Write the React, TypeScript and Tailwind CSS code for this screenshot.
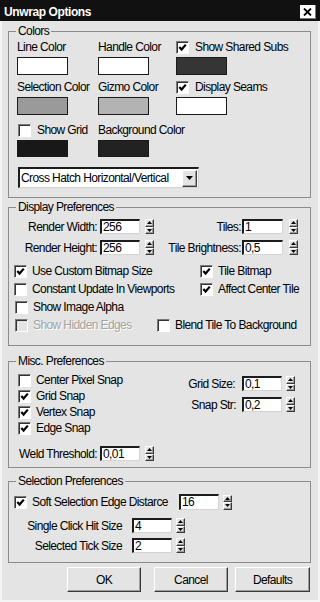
import React from "react";

const sunken =
  "border-t-2 border-l-2 border-t-[#1c1c1c] border-l-[#1c1c1c] border-r border-b border-r-[#d4d4d4] border-b-[#d4d4d4] bg-white";
const raised =
  "border border-t-white border-l-white border-r-[#3a3a3a] border-b-[#3a3a3a] shadow-[inset_-1px_-1px_0_#9c9c9c]";

function Check({ on, off }: { on?: boolean; off?: boolean }) {
  return (
    <span
      className={`flex h-[13px] w-[13px] shrink-0 items-center justify-center border border-t-[#7a7a7a] border-l-[#7a7a7a] border-r-white border-b-white shadow-[inset_1px_1px_0_#333] ${
        off ? "bg-[#e4e4e4]" : "bg-white"
      }`}
    >
      {on && (
        <svg width="9" height="9" viewBox="0 0 9 9">
          <path d="M1.3 4 L3.6 6.5 L7.8 1.6" fill="none" stroke="#000" strokeWidth="2.2" />
        </svg>
      )}
    </span>
  );
}

function CheckLabel({
  label,
  on,
  off,
  gap = "gap-[5px]",
}: {
  label: string;
  on?: boolean;
  off?: boolean;
  gap?: string;
}) {
  return (
    <div className={`flex items-center ${gap}`}>
      <Check on={on} off={off} />
      <span className={off ? "text-[#a3a3a3] [text-shadow:1px_1px_0_#fff]" : ""}>{label}</span>
    </div>
  );
}

function Spin() {
  return (
    <div className="flex h-[15px] w-[9px] shrink-0 flex-col bg-[#e4e4e4]">
      <div className={`flex flex-1 items-center justify-center ${raised}`}>
        <svg width="5" height="3" viewBox="0 0 5 3">
          <path d="M2.5 0 L5 3 L0 3Z" fill="#000" />
        </svg>
      </div>
      <div className={`flex flex-1 items-center justify-center ${raised}`}>
        <svg width="5" height="3" viewBox="0 0 5 3">
          <path d="M0 0 L5 0 L2.5 3Z" fill="#000" />
        </svg>
      </div>
    </div>
  );
}

function Num({ value, w = "w-[40px]", h = "h-[15px]" }: { value: string; w?: string; h?: string }) {
  return (
    <div className={`${w} ${h} shrink-0 pl-[1px] leading-[12px] ${sunken}`}>{value}</div>
  );
}

function Swatch({ color, h = "h-[18px]" }: { color: string; h?: string }) {
  return <div className={`mt-[3px] w-[51px] border border-[#1a1a1a] ${h} ${color}`} />;
}

function Group({ title, className, children }: { title: string; className: string; children: React.ReactNode }) {
  return (
    <fieldset className={`border border-[#8c8c8c] ${className}`}>
      <legend className="ml-[7px] px-[2px] leading-[14px]">{title}</legend>
      {children}
    </fieldset>
  );
}

function Button({ label, w }: { label: string; w: string }) {
  return (
    <div className={`flex h-[25px] items-center justify-center ${w} ${raised}`}>{label}</div>
  );
}

export default function App() {
  return (
    <div className="h-[602px] w-[320px] whitespace-nowrap bg-[#e4e4e4] font-['Liberation_Sans',Arial,sans-serif] text-[12px] leading-[14px] tracking-[-0.6px] text-black shadow-[inset_2px_0_0_#f4f4f4,inset_-2px_-2px_0_#f4f4f4]">
      {/* Title bar */}
      <div className="flex h-[21px] items-center justify-between bg-[#111] pl-[4px] pr-[4px]">
        <span className="pt-[2px] text-[12px] font-bold tracking-[-0.4px] text-white">Unwrap Options</span>
        <span className="mt-[3px] flex h-[14px] w-[16px] items-center justify-center border-r border-b border-r-[#7a7a7a] border-b-[#7a7a7a] bg-white">
          <svg width="9" height="8" viewBox="0 0 9 8">
            <path d="M1 0.5 L8 7.5 M8 0.5 L1 7.5" stroke="#000" strokeWidth="1.8" />
          </svg>
        </span>
      </div>

      <div className="pl-[8px] pr-[9px]">
        {/* Colors */}
        <Group title="Colors" className="mt-[3px]">
          <div className="pl-[8px] pt-[2px] pb-[9px]">
            <div className="flex">
              <div className="w-[81px]">
                <div className="h-[14px]">Line Color</div>
                <Swatch color="bg-white" />
              </div>
              <div className="w-[78px]">
                <div className="h-[14px]">Handle Color</div>
                <Swatch color="bg-white" />
              </div>
              <div>
                <div className="flex h-[14px] items-center">
                  <CheckLabel label="Show Shared Subs" on gap="gap-[6px]" />
                </div>
                <Swatch color="bg-[#353535]" />
              </div>
            </div>
            <div className="mt-[5px] flex">
              <div className="w-[81px]">
                <div className="h-[14px]">Selection Color</div>
                <Swatch color="bg-[#9a9a9a]" />
              </div>
              <div className="w-[78px]">
                <div className="h-[14px]">Gizmo Color</div>
                <Swatch color="bg-[#b3b3b3]" />
              </div>
              <div>
                <div className="flex h-[14px] items-center">
                  <CheckLabel label="Display Seams" on gap="gap-[6px]" />
                </div>
                <Swatch color="bg-white" />
              </div>
            </div>
            <div className="mt-[8px] flex">
              <div className="w-[81px]">
                <div className="flex h-[14px] items-center pl-[1px]">
                  <CheckLabel label="Show Grid" gap="gap-[6px]" />
                </div>
                <Swatch color="bg-[#181818]" h="h-[17px]" />
              </div>
              <div className="w-[78px]">
                <div className="h-[14px]">Background Color</div>
                <Swatch color="bg-[#222]" h="h-[17px]" />
              </div>
            </div>
            <div className={`ml-[1px] mt-[10px] flex h-[21px] w-[181px] items-center justify-between pr-[1px] ${sunken}`}>
              <span className="pl-[1px]">Cross Hatch Horizontal/Vertical</span>
              <span className={`flex h-[17px] w-[15px] items-center justify-center bg-[#e4e4e4] ${raised}`}>
                <svg width="7" height="4" viewBox="0 0 7 4">
                  <path d="M0 0 L7 0 L3.5 4Z" fill="#000" />
                </svg>
              </span>
            </div>
          </div>
        </Group>

        {/* Display Preferences */}
        <Group title="Display Preferences" className="mt-[2px]">
          <div className="pt-[5px] pb-[11px]">
            <div className="flex h-[15px] items-center">
              <span className="w-[88px] text-right">Render Width:</span>
              <span className="ml-[3px]"><Num value="256" /></span>
              <span className="ml-[5px]"><Spin /></span>
              <span className="w-[87px] text-right">Tiles:</span>
              <span className="ml-[1px]"><Num value="1" w="w-[41px]" /></span>
              <span className="ml-[6px]"><Spin /></span>
            </div>
            <div className="mt-[6px] flex h-[15px] items-center">
              <span className="w-[88px] text-right">Render Height:</span>
              <span className="ml-[3px]"><Num value="256" /></span>
              <span className="ml-[5px]"><Spin /></span>
              <span className="w-[87px] text-right">Tile Brightness:</span>
              <span className="ml-[1px]"><Num value="0,5" w="w-[41px]" /></span>
              <span className="ml-[6px]"><Spin /></span>
            </div>
            <div className="mt-[7px] pl-[5px]">
              <div className="flex h-[18px] items-center">
                <div className="w-[186px]"><CheckLabel label="Use Custom Bitmap Size" on /></div>
                <CheckLabel label="Tile Bitmap" on />
              </div>
              <div className="flex h-[18px] items-center">
                <div className="w-[186px]"><CheckLabel label="Constant Update In Viewports" /></div>
                <CheckLabel label="Affect Center Tile" on />
              </div>
              <div className="flex h-[18px] items-center pl-[1px]">
                <CheckLabel label="Show Image Alpha" />
              </div>
              <div className="flex h-[18px] items-center pl-[1px]">
                <div className="w-[142px]"><CheckLabel label="Show Hidden Edges" off /></div>
                <CheckLabel label="Blend Tile To Background" />
              </div>
            </div>
          </div>
        </Group>

        {/* Misc. Preferences */}
        <Group title="Misc. Preferences" className="mt-[8px]">
          <div className="pb-[6px]">
            <div className="flex">
              <div className="pl-[9px] pt-[4px]">
                <div className="flex h-[16px] items-center"><CheckLabel label="Center Pixel Snap" /></div>
                <div className="flex h-[16px] items-center"><CheckLabel label="Grid Snap" on /></div>
                <div className="flex h-[16px] items-center"><CheckLabel label="Vertex Snap" on /></div>
                <div className="flex h-[16px] items-center"><CheckLabel label="Edge Snap" on /></div>
              </div>
              <div className="ml-auto pr-[15px] pt-[8px]">
                <div className="flex h-[15px] items-center justify-end">
                  <span>Grid Size:</span>
                  <span className="ml-[7px]"><Num value="0,1" /></span>
                  <span className="ml-[4px]"><Spin /></span>
                </div>
                <div className="mt-[6px] flex h-[15px] items-center justify-end">
                  <span>Snap Str:</span>
                  <span className="ml-[6px]"><Num value="0,2" /></span>
                  <span className="ml-[4px]"><Spin /></span>
                </div>
              </div>
            </div>
            <div className="mt-[10px] flex h-[15px] items-center">
              <span className="w-[88px] text-right">Weld Threshold:</span>
              <span className="ml-[3px]"><Num value="0,01" /></span>
              <span className="ml-[5px]"><Spin /></span>
            </div>
          </div>
        </Group>

        {/* Selection Preferences */}
        <Group title="Selection Preferences" className="mt-[6px]">
          <div className="pt-[6px] pb-[9px]">
            <div className="flex h-[16px] items-center pl-[5px]">
              <div className="w-[165px]"><CheckLabel label="Soft Selection Edge Distarce" on /></div>
              <Num value="16" w="w-[40px]" h="h-[16px]" />
              <span className="ml-[4px]"><Spin /></span>
            </div>
            <div className="mt-[8px] flex h-[15px] items-center">
              <span className="w-[113px] text-right">Single Click Hit Size</span>
              <span className="ml-[10px]"><Num value="4" /></span>
              <span className="ml-[4px]"><Spin /></span>
            </div>
            <div className="mt-[5px] flex h-[15px] items-center">
              <span className="w-[113px] text-right">Selected Tick Size</span>
              <span className="ml-[10px]"><Num value="2" /></span>
              <span className="ml-[4px]"><Spin /></span>
            </div>
          </div>
        </Group>

        {/* Buttons */}
        <div className="mt-[4px] flex justify-end pr-[1px]">
          <Button label="OK" w="w-[74px]" />
          <span className="ml-[13px]"><Button label="Cancel" w="w-[74px]" /></span>
          <span className="ml-[7px]"><Button label="Defaults" w="w-[75px]" /></span>
        </div>
      </div>
    </div>
  );
}
